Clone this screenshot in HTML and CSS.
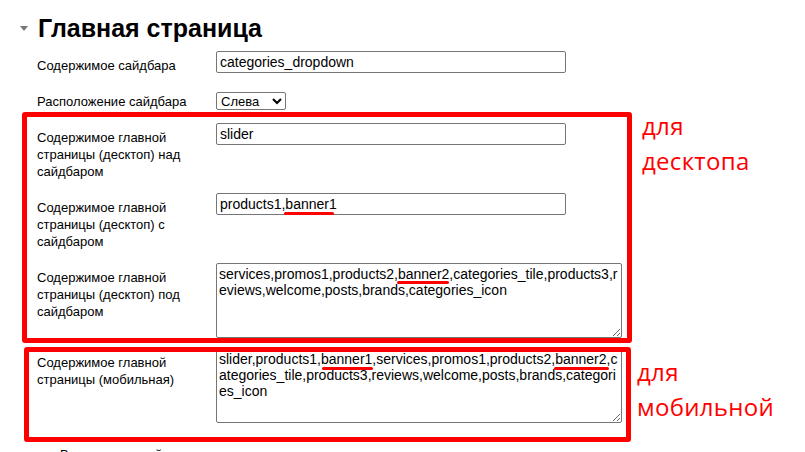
FILE: index.html
```html
<!DOCTYPE html>
<html lang="ru">
<head>
<meta charset="utf-8">
<title>Главная страница</title>
<link rel="stylesheet" href="styles.css">
</head>
<body>
<div class="page">
  <h2 class="section-title"><span class="caret"></span>Главная страница</h2>
  <div class="form">
    <div class="row">
      <label class="label">Содержимое сайдбара</label>
      <div class="field"><input class="text" type="text" value="categories_dropdown"></div>
    </div>
    <div class="row">
      <label class="label">Расположение сайдбара</label>
      <div class="field"><select class="select"><option>Слева</option><option>Справа</option></select></div>
    </div>
    <div class="row">
      <label class="label">Содержимое главной страницы (десктоп) над сайдбаром</label>
      <div class="field"><input class="text" type="text" value="slider"></div>
    </div>
    <div class="row">
      <label class="label">Содержимое главной страницы (десктоп) с сайдбаром</label>
      <div class="field"><input class="text" type="text" value="products1,banner1"></div>
    </div>
    <div class="row">
      <label class="label">Содержимое главной страницы (десктоп) под сайдбаром</label>
      <div class="field"><textarea class="area">services,promos1,products2,banner2,categories_tile,products3,reviews,welcome,posts,brands,categories_icon</textarea></div>
    </div>
    <div class="row">
      <label class="label">Содержимое главной страницы (мобильная)</label>
      <div class="field"><textarea class="area">slider,products1,banner1,services,promos1,products2,banner2,categories_tile,products3,reviews,welcome,posts,brands,categories_icon</textarea></div>
    </div>
    <div class="row row-check">
      <span class="check-label">Вывод категорий</span>
    </div>
  </div>

  <div class="mark box box-desktop"></div>
  <div class="mark box box-mobile"></div>
  <div class="mark uline u1"></div>
  <div class="mark uline u2"></div>
  <div class="mark uline u3"></div>
  <div class="mark uline u4"></div>
  <div class="note note-desktop">для<br>десктопа</div>
  <div class="note note-mobile">для<br>мобильной</div>
</div>
</body>
</html>
```
FILE: styles.css
```css
html, body {
  margin: 0;
  padding: 0;
  background: #fff;
}
body {
  font-family: "Liberation Sans", Arial, sans-serif;
  color: #000;
  overflow: hidden;
}
.page {
  position: relative;
  width: 805px;
  height: 452px;
  overflow: hidden;
}
.section-title {
  margin: 14px 0 9px 20px;
  font-size: 25px;
  line-height: 28px;
  font-weight: bold;
  display: flex;
  align-items: center;
}
.caret {
  width: 0;
  height: 0;
  border-left: 4px solid transparent;
  border-right: 4px solid transparent;
  border-top: 5px solid #777;
  margin-right: 10px;
  margin-top: 1px;
}
.form {
  padding-left: 37px;
  display: flex;
  flex-direction: column;
  gap: 6px;
}
.row {
  display: grid;
  grid-template-columns: 179px auto;
  align-items: start;
}
.label {
  font-size: 13px;
  line-height: 17px;
  padding: 6px 0 7px;
  width: 160px;
}
.field {
  display: flex;
}
.text {
  box-sizing: border-box;
  width: 350px;
  height: 22px;
  margin: 0;
  padding: 0 3px;
  font-family: "Liberation Sans", Arial, sans-serif;
  font-size: 14px;
  color: #000;
  border: 1px solid #767676;
  border-radius: 2px;
}
.select {
  box-sizing: border-box;
  width: 70px;
  height: 18px;
  margin: 5px 0 0;
  font-family: "Liberation Sans", Arial, sans-serif;
  font-size: 13px;
  color: #000;
  border: 1px solid #767676;
  border-radius: 2px;
  background: #fff;
}
.area {
  box-sizing: border-box;
  display: block;
  width: 406px;
  height: 75px;
  margin: 0 0 4px;
  padding: 2px 2px;
  font-family: "Liberation Sans", Arial, sans-serif;
  font-size: 14px;
  line-height: 16px;
  color: #000;
  border: 1px solid #767676;
  border-radius: 2px;
  resize: both;
}
.row-check {
  padding-left: 23px;
  padding-top: 12px;
  display: block;
}
.check-label {
  font-size: 13px;
  line-height: 17px;
}

/* annotations drawn over the screenshot */
.mark {
  position: absolute;
}
.box {
  box-sizing: border-box;
  border: 5px solid #ff0000;
  border-radius: 3px;
}
.box-desktop {
  left: 22px;
  top: 112px;
  width: 610px;
  height: 231px;
}
.box-mobile {
  left: 24px;
  top: 347px;
  width: 607px;
  height: 95px;
}
.uline {
  height: 3px;
  background: #ff0000;
  border-radius: 2px;
}
.u1 { left: 284px; top: 212px; width: 50px; }
.u2 { left: 397px; top: 281px; width: 52px; }
.u3 { left: 322px; top: 367px; width: 51px; }
.u4 { left: 554px; top: 367px; width: 55px; }
.note {
  position: absolute;
  font-family: "Open Sans", "Noto Sans", sans-serif;
  font-size: 24px;
  letter-spacing: 0.3px;
  line-height: 35px;
  color: #ff0000;
}
.note-desktop {
  left: 642px;
  top: 108px;
}
.note-mobile {
  left: 637px;
  top: 354px;
}
```
